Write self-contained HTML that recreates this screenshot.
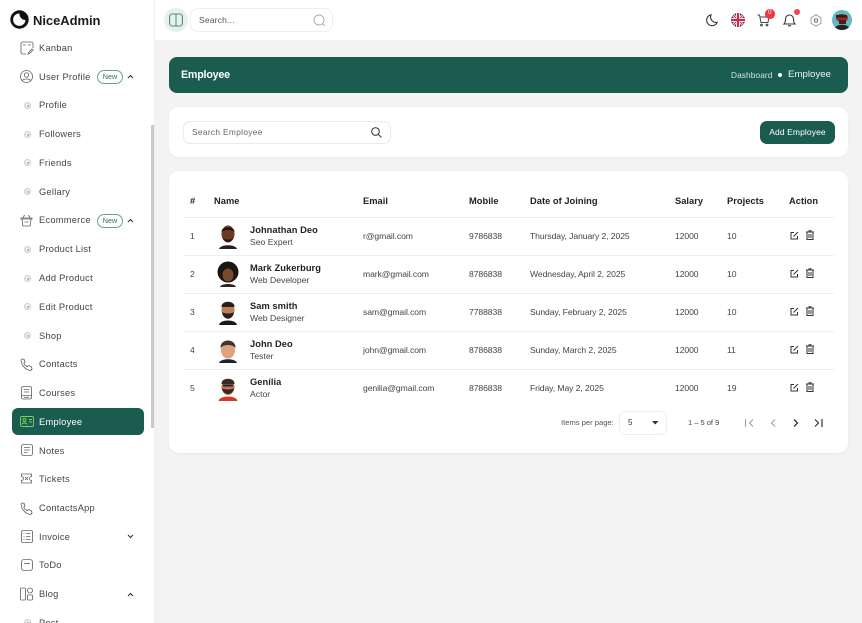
<!DOCTYPE html>
<html><head><meta charset="utf-8"><style>
*{box-sizing:border-box}
html,body{margin:0;padding:0;width:862px;height:623px;overflow:hidden;background:#f3f3f3}
#w{position:absolute;left:0;top:0;width:862px;height:623px;overflow:hidden;background:#f3f3f3;font-family:"Liberation Sans",sans-serif;color:#333;filter:blur(.25px)}
.a{position:absolute;white-space:nowrap}
.t{position:absolute;white-space:nowrap;line-height:12px;height:12px}
.s{font-size:9.3px;color:#444;left:39px;letter-spacing:.25px}
.b{position:absolute;left:24px;width:7px;height:7px;border-radius:50%;border:1px solid #cdcdcd;background:#eee}
.b:after{content:"";position:absolute;left:1.5px;top:1.5px;width:2px;height:2px;background:#aaa;border-radius:50%}
.h{font-size:9.3px;font-weight:bold;color:#222;letter-spacing:.03px}
.c{font-size:8.6px;color:#444;letter-spacing:-.08px}
.n{font-size:9.3px;font-weight:bold;color:#222;left:250px;letter-spacing:.05px}
.r{font-size:8.6px;color:#444;left:250px;letter-spacing:.02px}
.l{position:absolute;left:183px;width:651px;height:1px;background:#eeeeee}
svg{position:absolute;overflow:visible}
.new{position:absolute;left:97px;width:26px;height:14px;border:1px solid #6c9f94;border-radius:8px;font-size:7.2px;line-height:12px;text-align:center;color:#2f6d60}
</style></head><body><div id="w">

<div class="a" style="left:0;top:0;width:155px;height:623px;background:#fff;border-right:1px solid #eeeeee"></div>
<div class="a" style="left:151px;top:125px;width:3px;height:303px;background:#c9c9c9"></div>
<div class="a" style="left:0;top:0;width:862px;height:40px;background:#fff"></div>
<div class="a" style="left:154px;top:0;width:1px;height:40px;background:#f0f0f0"></div>

<!-- logo -->
<svg style="left:10px;top:10px" width="19" height="19" viewBox="0 0 19 19"><circle cx="9.5" cy="9.5" r="9.2" fill="#111"/><path d="M9.500 3.500a6 6 0 0 0 6 6.500 6.200 6.200 0 1 1-6-6.500z" fill="#fff"/></svg>
<div class="t" style="left:33px;top:12px;font-size:13px;line-height:17px;height:17px;font-weight:bold;color:#1c1c1c;letter-spacing:-.05px">NiceAdmin</div>

<!-- sidebar icons -->
<svg style="left:20px;top:41px" width="14" height="14" viewBox="0 0 14 14" fill="none" stroke="#666" stroke-width=".85"><path d="M6 13H3a2 2 0 0 1-2-2V3a2 2 0 0 1 2-2h8a2 2 0 0 1 2 2v4M3 4h3M8 4h3M8 13l1-2 3-3 1 1-3 3z"/></svg>
<svg style="left:20px;top:70px" width="13" height="13" viewBox="0 0 13 13" fill="none" stroke="#666" stroke-width=".85"><circle cx="6.500" cy="6.500" r="6"/><circle cx="6.500" cy="5" r="2.200"/><path d="M2.500 10.500c1-2 7-2 8 0"/></svg>
<svg style="left:20px;top:214px" width="13" height="13" viewBox="0 0 13 13" fill="none" stroke="#666" stroke-width=".85"><path d="M1 4h11v1H1zM2 5l.7 6a1 1 0 0 0 1 1h5.600a1 1 0 0 0 1-1l.7-6M3 4l1.500-3M10 4L8.500 1M4.500 8h4"/></svg>
<svg style="left:20px;top:358px" width="13" height="13" viewBox="0 0 13 13" fill="none" stroke="#666" stroke-width=".85"><path d="M2 1l2 .3 1 2.700-1.200 1.200c.7 1.500 1.800 2.700 3.300 3.500L8.300 7.500l3 1.200.7 2.300c-.500 1-1.500 1.500-2.500 1.300C5 11.300 1.500 7 1 2.500 1 2 1.500 1.200 2 1z"/></svg>
<svg style="left:21px;top:386px" width="12" height="14" viewBox="0 0 12 14" fill="none" stroke="#666" stroke-width=".85"><rect x=".5" y=".5" width="10" height="12.500" rx="1.500"/><path d="M.5 9.500h10M3 3.500h5M3 6h5M3 11.300h5"/></svg>
<svg style="left:21px;top:444px" width="12" height="12" viewBox="0 0 12 12" fill="none" stroke="#666" stroke-width=".85"><rect x=".5" y=".5" width="11" height="11" rx="2"/><path d="M3 3.500h6M3 6h6M3 8.500h3.500"/></svg>
<svg style="left:20px;top:473px" width="13" height="11" viewBox="0 0 13 11" fill="none" stroke="#666" stroke-width=".85"><path d="M1.500 1h10v2.500a2 2 0 0 0 0 4V10h-10V7.500a2 2 0 0 0 0-4zM5 4l3 3M8 4L5 7"/></svg>
<svg style="left:20px;top:502px" width="13" height="13" viewBox="0 0 13 13" fill="none" stroke="#666" stroke-width=".85"><path d="M2 1l2 .3 1 2.700-1.200 1.200c.7 1.500 1.800 2.700 3.300 3.500L8.300 7.500l3 1.200.7 2.300c-.500 1-1.500 1.500-2.500 1.300C5 11.300 1.500 7 1 2.500 1 2 1.500 1.200 2 1z"/></svg>
<svg style="left:21px;top:530px" width="12" height="13" viewBox="0 0 12 13" fill="none" stroke="#666" stroke-width=".85"><rect x=".5" y=".5" width="11" height="12" rx="1.500"/><path d="M2.500 3.500h1M5 3.500h4.500M2.500 6.500h1M5 6.500h4.500M2.500 9.500h1M5 9.500h4.500"/></svg>
<svg style="left:21px;top:559px" width="12" height="12" viewBox="0 0 12 12" fill="none" stroke="#666" stroke-width=".85"><rect x=".5" y=".5" width="11" height="11" rx="2.500"/><path d="M3 4.500h6"/></svg>
<svg style="left:20px;top:587px" width="13" height="14" viewBox="0 0 13 14" fill="none" stroke="#666" stroke-width=".85"><rect x=".5" y="1" width="5" height="12" rx=".8"/><circle cx="10" cy="3.500" r="2.500"/><rect x="7.500" y="8" width="5" height="5" rx=".6"/></svg>

<!-- bullets -->
<div class="b" style="top:102px"></div><div class="b" style="top:131px"></div><div class="b" style="top:159px"></div><div class="b" style="top:188px"></div>
<div class="b" style="top:246px"></div><div class="b" style="top:275px"></div><div class="b" style="top:303px"></div><div class="b" style="top:332px"></div><div class="b" style="top:619px"></div>

<!-- active -->
<div class="a" style="left:12px;top:408px;width:132px;height:27px;background:#1a5c50;border-radius:6px"></div>
<svg style="left:20px;top:416px" width="14" height="11" viewBox="0 0 14 11" fill="none" stroke="#7bd161" stroke-width=".9"><rect x=".5" y=".5" width="13" height="10" rx="1.500"/><circle cx="4.500" cy="4" r="1.500"/><path d="M2 8.500c.5-2 4.500-2 5 0M9 3.500h3M9 6h3"/></svg>

<div class="t s" style="top:42px">Kanban</div>
<div class="t s" style="top:71px">User Profile</div>
<div class="t s" style="top:99px">Profile</div>
<div class="t s" style="top:128px">Followers</div>
<div class="t s" style="top:157px">Friends</div>
<div class="t s" style="top:186px">Gellary</div>
<div class="t s" style="top:214px">Ecommerce</div>
<div class="t s" style="top:243px">Product List</div>
<div class="t s" style="top:272px">Add Product</div>
<div class="t s" style="top:301px">Edit Product</div>
<div class="t s" style="top:330px">Shop</div>
<div class="t s" style="top:358px">Contacts</div>
<div class="t s" style="top:387px">Courses</div>
<div class="t s" style="top:416px;color:#fff">Employee</div>
<div class="t s" style="top:445px">Notes</div>
<div class="t s" style="top:473px">Tickets</div>
<div class="t s" style="top:502px">ContactsApp</div>
<div class="t s" style="top:531px">Invoice</div>
<div class="t s" style="top:559px">ToDo</div>
<div class="t s" style="top:588px">Blog</div>
<div class="t s" style="top:617px">Post</div>

<div class="new" style="top:70px">New</div>
<div class="new" style="top:214px">New</div>
<svg style="left:127px;top:74px" width="7" height="5" fill="none" stroke="#333" stroke-width="1.100"><path d="M1 4l2.500-2.500L6 4"/></svg>
<svg style="left:127px;top:218px" width="7" height="5" fill="none" stroke="#333" stroke-width="1.100"><path d="M1 4l2.500-2.500L6 4"/></svg>
<svg style="left:127px;top:534px" width="7" height="5" fill="none" stroke="#333" stroke-width="1.100"><path d="M1 1l2.500 2.500L6 1"/></svg>
<svg style="left:127px;top:592px" width="7" height="5" fill="none" stroke="#333" stroke-width="1.100"><path d="M1 4l2.500-2.500L6 4"/></svg>

<!-- header -->
<div class="a" style="left:164px;top:8px;width:24px;height:24px;border-radius:50%;background:#e8f0ee"></div>
<svg style="left:169px;top:13px" width="14" height="14" viewBox="0 0 14 14" fill="none" stroke="#4f8a7e" stroke-width="1.100"><rect x=".6" y="1" width="12.800" height="12" rx="2.500"/><path d="M7 1v12" stroke-width="1"/></svg>
<div class="a" style="left:190px;top:8px;width:143px;height:24px;border:1px solid #eeeeee;border-radius:8px;background:#fff"></div>
<div class="t" style="left:199px;top:14px;font-size:8.400px;color:#555;letter-spacing:.25px">Search...</div>
<svg style="left:313px;top:14px" width="13" height="13" viewBox="0 0 13 13" fill="none" stroke="#aaa" stroke-width=".9"><circle cx="6" cy="6" r="5"/><path d="M9.500 9.500l2.500 2.500"/></svg>

<svg style="left:706px;top:14px" width="12" height="12" viewBox="0 0 12 12" fill="none" stroke="#333" stroke-width="1.100"><path d="M5 .8a5.500 5.500 0 1 0 6.200 7.500A5.500 5.500 0 0 1 5 .8z"/></svg>
<svg style="left:731px;top:13px" width="14" height="14" viewBox="0 0 14 14"><defs><clipPath id="f"><circle cx="7" cy="7" r="7"/></clipPath></defs><g clip-path="url(#f)"><rect width="14" height="14" fill="#2b3f8f"/><path d="M0 0l14 14M14 0L0 14" stroke="#fff" stroke-width="2.600"/><path d="M0 0l14 14M14 0L0 14" stroke="#d8243c" stroke-width="1"/><path d="M7 0v14M0 7h14" stroke="#fff" stroke-width="4"/><path d="M7 0v14M0 7h14" stroke="#d8243c" stroke-width="2.200"/></g></svg>
<svg style="left:757px;top:14px" width="13" height="13" viewBox="0 0 13 13" fill="none" stroke="#444" stroke-width="1"><path d="M.5 1h2l1.500 7.500h7L12 3H3"/><circle cx="4.500" cy="11" r=".9"/><circle cx="10" cy="11" r=".9"/></svg>
<div class="a" style="left:765px;top:9px;width:9.500px;height:9.500px;border-radius:50%;background:#f0393f;color:#fff;font-size:6px;line-height:9.500px;text-align:center">0</div>
<svg style="left:783px;top:14px" width="13" height="13" viewBox="0 0 13 13" fill="none" stroke="#333" stroke-width="1.100"><path d="M1 10c1-1 1.500-2 1.500-5a4 4 0 0 1 8 0c0 3 .5 4 1.500 5zM5 11.800h3"/></svg>
<div class="a" style="left:794px;top:9px;width:6px;height:6px;border-radius:50%;background:#f2454d"></div>
<svg style="left:810px;top:14px" width="12" height="13" viewBox="0 0 12 13" fill="none" stroke="#999" stroke-width=".9"><path d="M6 .8l5 2.900v5.600l-5 2.900-5-2.900V3.700z"/><circle cx="6" cy="6.500" r="1.700" stroke="#555"/></svg>
<svg style="left:832px;top:10px" width="20" height="20" viewBox="0 0 20 20"><defs><clipPath id="p"><circle cx="10" cy="10" r="10"/></clipPath></defs><g clip-path="url(#p)"><rect width="20" height="20" fill="#63b8c4"/><ellipse cx="10" cy="8" rx="6" ry="4" fill="#a3241d"/><path d="M4 5h11v2.500H4z" fill="#222"/><path d="M2 20c0-7 16-7 16 0z" fill="#222"/><rect x="7" y="10" width="7" height="4" fill="#4a1f18"/></g></svg>

<!-- breadcrumb bar -->
<div class="a" style="left:169px;top:57px;width:679px;height:36px;background:#1a5c50;border-radius:8px"></div>
<div class="t" style="left:181px;top:69px;font-size:10.700px;font-weight:bold;color:#fff;letter-spacing:-.2px">Employee</div>
<div class="t" style="left:731px;top:69px;font-size:8.300px;color:#d3e0dd;letter-spacing:.1px">Dashboard</div>
<div class="a" style="left:778px;top:73px;width:4px;height:4px;border-radius:50%;background:#fff"></div>
<div class="t" style="left:788px;top:69px;font-size:9.600px;color:#eef4f2;letter-spacing:.05px">Employee</div>

<!-- search card -->
<div class="a" style="left:169px;top:107px;width:679px;height:50px;background:#fff;border-radius:10px;box-shadow:0 1px 2px rgba(0,0,0,.04)"></div>
<div class="a" style="left:183px;top:121px;width:208px;height:23px;border:1px solid #eaeaea;border-radius:7px;background:#fff"></div>
<div class="t" style="left:192px;top:126px;font-size:8.300px;color:#666;letter-spacing:.35px">Search Employee</div>
<svg style="left:371px;top:127px" width="11" height="11" viewBox="0 0 11 11" fill="none" stroke="#444" stroke-width="1.100"><circle cx="4.500" cy="4.500" r="3.800"/><path d="M7.300 7.300L10.500 10.500"/></svg>
<div class="a" style="left:760px;top:121px;width:75px;height:23px;border-radius:7px;background:#1a5c50;color:#fff;font-size:8.500px;line-height:23px;text-align:center;letter-spacing:.1px">Add Employee</div>

<!-- table card -->
<div class="a" style="left:169px;top:171px;width:679px;height:282px;background:#fff;border-radius:10px;box-shadow:0 1px 2px rgba(0,0,0,.05)"></div>
<div class="t h" style="left:190px;top:195px">#</div>
<div class="t h" style="left:214px;top:195px">Name</div>
<div class="t h" style="left:363px;top:195px">Email</div>
<div class="t h" style="left:469px;top:195px">Mobile</div>
<div class="t h" style="left:530px;top:195px">Date of Joining</div>
<div class="t h" style="left:675px;top:195px">Salary</div>
<div class="t h" style="left:727px;top:195px">Projects</div>
<div class="t h" style="left:789px;top:195px">Action</div>

<div class="l" style="top:217px"></div><div class="l" style="top:255px"></div><div class="l" style="top:293px"></div><div class="l" style="top:331px"></div><div class="l" style="top:369px"></div>

<!-- avatars -->
<svg style="left:217px;top:224px" width="22" height="26" viewBox="0 0 22 26"><path d="M2 25c1-5 17-5 18 0z" fill="#222"/><ellipse cx="11" cy="10" rx="6.500" ry="8.500" fill="#6b3a26"/><path d="M4.500 8C4 2 18 2 17.500 8 15 5 7 5 4.500 8z" fill="#1c1311"/><path d="M6 14c2 5 8 5 10 0-2 2-8 2-10 0z" fill="#2a1712"/></svg>
<svg style="left:216px;top:262px" width="24" height="26" viewBox="0 0 24 26"><circle cx="12" cy="10" r="10.500" fill="#1d1512"/><ellipse cx="12" cy="13" rx="5.500" ry="6.500" fill="#7a4a2e"/><path d="M4 25c1-4 15-4 16 0z" fill="#2b2422"/></svg>
<svg style="left:217px;top:300px" width="22" height="26" viewBox="0 0 22 26"><path d="M2 25c1-6 17-6 18 0z" fill="#1a1a1a"/><ellipse cx="11" cy="10" rx="6.500" ry="8" fill="#b98158"/><path d="M4.500 7C4 0 18 0 17.500 7z" fill="#2b1d18"/><path d="M5 12c1 9 11 9 12 0-2 2-10 2-12 0z" fill="#2e1f19"/></svg>
<svg style="left:217px;top:338px" width="22" height="26" viewBox="0 0 22 26"><path d="M2 25c1-5 17-5 18 0z" fill="#1b2530"/><ellipse cx="11" cy="12" rx="7" ry="8.500" fill="#e0a27e"/><path d="M3.500 10C3 0 19 0 18.500 10 15 6 7 6 3.500 10z" fill="#3c3632"/></svg>
<svg style="left:217px;top:376px" width="22" height="26" viewBox="0 0 22 26"><path d="M1.500 25c1-6 18-6 19 0z" fill="#d23a25"/><ellipse cx="11" cy="11" rx="6.500" ry="8" fill="#b8795a"/><path d="M4.500 8C4 1 18 1 17.500 8z" fill="#3a2a25"/><path d="M5 12c1 8 11 8 12 0-2 2-10 2-12 0z" fill="#3a241d"/><rect x="6" y="8.500" width="10" height="2" fill="#222"/></svg>

<!-- rows -->
<div class="t c" style="left:190px;top:230px">1</div><div class="t n" style="top:224px">Johnathan Deo</div><div class="t r" style="top:236px">Seo Expert</div><div class="t c" style="left:363px;top:230px">r@gmail.com</div><div class="t c" style="left:469px;top:230px">9786838</div><div class="t c" style="left:530px;top:230px">Thursday, January 2, 2025</div><div class="t c" style="left:675px;top:230px">12000</div><div class="t c" style="left:727px;top:230px">10</div>
<div class="t c" style="left:190px;top:268px">2</div><div class="t n" style="top:262px">Mark Zukerburg</div><div class="t r" style="top:274px">Web Developer</div><div class="t c" style="left:363px;top:268px">mark@gmail.com</div><div class="t c" style="left:469px;top:268px">8786838</div><div class="t c" style="left:530px;top:268px">Wednesday, April 2, 2025</div><div class="t c" style="left:675px;top:268px">12000</div><div class="t c" style="left:727px;top:268px">10</div>
<div class="t c" style="left:190px;top:306px">3</div><div class="t n" style="top:300px">Sam smith</div><div class="t r" style="top:312px">Web Designer</div><div class="t c" style="left:363px;top:306px">sam@gmail.com</div><div class="t c" style="left:469px;top:306px">7788838</div><div class="t c" style="left:530px;top:306px">Sunday, February 2, 2025</div><div class="t c" style="left:675px;top:306px">12000</div><div class="t c" style="left:727px;top:306px">10</div>
<div class="t c" style="left:190px;top:344px">4</div><div class="t n" style="top:338px">John Deo</div><div class="t r" style="top:350px">Tester</div><div class="t c" style="left:363px;top:344px">john@gmail.com</div><div class="t c" style="left:469px;top:344px">8786838</div><div class="t c" style="left:530px;top:344px">Sunday, March 2, 2025</div><div class="t c" style="left:675px;top:344px">12000</div><div class="t c" style="left:727px;top:344px">11</div>
<div class="t c" style="left:190px;top:382px">5</div><div class="t n" style="top:376px">Genilia</div><div class="t r" style="top:388px">Actor</div><div class="t c" style="left:363px;top:382px">genilia@gmail.com</div><div class="t c" style="left:469px;top:382px">8786838</div><div class="t c" style="left:530px;top:382px">Friday, May 2, 2025</div><div class="t c" style="left:675px;top:382px">12000</div><div class="t c" style="left:727px;top:382px">19</div>

<!-- action icons -->
<svg style="left:790px;top:231px" width="9" height="9" viewBox="0 0 9 9" fill="none" stroke="#333" stroke-width="1"><path d="M4 1.500H1v6.500h6.500V5M3.500 5.500L8 1"/></svg><svg style="left:806px;top:230px" width="8" height="10" viewBox="0 0 8 10" fill="none" stroke="#333" stroke-width="1"><path d="M0 2h8M3 2V.7h2V2M1 2.500V9.500h6V2.500M3 4v4M5 4v4"/></svg>
<svg style="left:790px;top:269px" width="9" height="9" viewBox="0 0 9 9" fill="none" stroke="#333" stroke-width="1"><path d="M4 1.500H1v6.500h6.500V5M3.500 5.500L8 1"/></svg><svg style="left:806px;top:268px" width="8" height="10" viewBox="0 0 8 10" fill="none" stroke="#333" stroke-width="1"><path d="M0 2h8M3 2V.7h2V2M1 2.500V9.500h6V2.500M3 4v4M5 4v4"/></svg>
<svg style="left:790px;top:307px" width="9" height="9" viewBox="0 0 9 9" fill="none" stroke="#333" stroke-width="1"><path d="M4 1.500H1v6.500h6.500V5M3.500 5.500L8 1"/></svg><svg style="left:806px;top:306px" width="8" height="10" viewBox="0 0 8 10" fill="none" stroke="#333" stroke-width="1"><path d="M0 2h8M3 2V.7h2V2M1 2.500V9.500h6V2.500M3 4v4M5 4v4"/></svg>
<svg style="left:790px;top:345px" width="9" height="9" viewBox="0 0 9 9" fill="none" stroke="#333" stroke-width="1"><path d="M4 1.500H1v6.500h6.500V5M3.500 5.500L8 1"/></svg><svg style="left:806px;top:344px" width="8" height="10" viewBox="0 0 8 10" fill="none" stroke="#333" stroke-width="1"><path d="M0 2h8M3 2V.7h2V2M1 2.500V9.500h6V2.500M3 4v4M5 4v4"/></svg>
<svg style="left:790px;top:383px" width="9" height="9" viewBox="0 0 9 9" fill="none" stroke="#333" stroke-width="1"><path d="M4 1.500H1v6.500h6.500V5M3.500 5.500L8 1"/></svg><svg style="left:806px;top:382px" width="8" height="10" viewBox="0 0 8 10" fill="none" stroke="#333" stroke-width="1"><path d="M0 2h8M3 2V.7h2V2M1 2.500V9.500h6V2.500M3 4v4M5 4v4"/></svg>

<!-- paginator -->
<div class="t" style="left:561px;top:417px;font-size:7.600px;color:#555">Items per page:</div>
<div class="a" style="left:619px;top:411px;width:48px;height:24px;border:1px solid #eeeeee;border-radius:7px"></div>
<div class="t" style="left:628px;top:417px;font-size:8px;color:#333">5</div>
<svg style="left:652px;top:421px" width="7" height="4"><path d="M0 0h6.500L3.250 3.500z" fill="#333"/></svg>
<div class="t" style="left:688px;top:417px;font-size:7.500px;color:#444">1 – 5 of 9</div>
<svg style="left:745px;top:419px" width="9" height="8" fill="none" stroke="#999" stroke-width="1"><path d="M.6 0v8M8 .5L4.500 4 8 7.500"/></svg>
<svg style="left:770px;top:419px" width="6" height="8" fill="none" stroke="#999" stroke-width="1"><path d="M5 .5L1.500 4 5 7.500"/></svg>
<svg style="left:793px;top:419px" width="6" height="8" fill="none" stroke="#333" stroke-width="1.300"><path d="M1 .5L4.500 4 1 7.500"/></svg>
<svg style="left:814px;top:419px" width="9" height="8" fill="none" stroke="#333" stroke-width="1.200"><path d="M1 .5L4.500 4 1 7.500M8 0v8"/></svg>

</div></body></html>
